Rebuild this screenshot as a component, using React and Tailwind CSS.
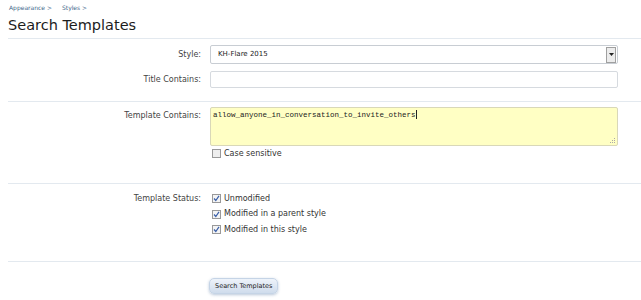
export default function App() {
  const ui = { fontFamily: '"DejaVu Sans", Verdana, sans-serif' };
  return (
    <div className="w-[641px] h-[300px] bg-white overflow-hidden text-[#333]" style={ui}>
      <div className="pl-[9px] pt-[4px]">
        <div className="flex gap-[10px] text-[6px] leading-[8px] text-[#42688a]">
          <span>Appearance &gt;</span>
          <span>Styles &gt;</span>
        </div>
        <h1 className="text-[14.5px] leading-[20px] mt-[3px] text-[#1c1c1c] -ml-[1px]">Search Templates</h1>
      </div>

      <div className="ml-[8px] mt-[3px] border-t border-[#e3e9ef]">
        {/* Style + title */}
        <div className="pt-[6px] pb-[13px]">
          <div className="flex items-center h-[19px]">
            <label className="w-[193px] text-right text-[8px] text-[#444]">Style:</label>
            <div className="ml-[9px] w-[408px] h-[19px] border border-[#c8cdd3] rounded-[2px] flex items-center justify-between bg-white">
              <span className="pl-[7px] text-[7px] text-[#222]">KH-Flare 2015</span>
              <span className="w-[10px] h-[16px] mr-[1px] border border-[#a0a0a0] bg-[#ececec] flex items-center justify-center">
                <svg width="5" height="3" viewBox="0 0 5 3"><path d="M0 0h5L2.5 3z" fill="#222" /></svg>
              </span>
            </div>
          </div>
          <div className="flex items-center h-[17px] mt-[7px]">
            <label className="w-[193px] text-right text-[8px] text-[#444]">Title Contains:</label>
            <div className="ml-[9px] w-[408px] h-[17px] border border-[#d6dadf] rounded-[2px] bg-white" />
          </div>
        </div>

        {/* Template contains */}
        <div className="border-t border-[#e3e9ef] pt-[5px] pb-[24px]">
          <div className="flex items-start">
            <label className="w-[193px] text-right text-[8px] text-[#444] pt-[3px]">Template Contains:</label>
            <div className="ml-[9px]">
              <div
                className="relative w-[408px] h-[39px] border border-[#d9d8b8] rounded-[2px] bg-[#ffffc4] px-[2px] pt-[2px] text-[7.5px] leading-[10px] text-[#222]"
                style={{ fontFamily: '"Liberation Mono", monospace' }}
              >
                <span>allow_anyone_in_conversation_to_invite_others</span>
                <span className="inline-block w-px h-[9px] bg-[#222] align-[-2px]" />
                <svg className="absolute right-[1px] bottom-[1px]" width="6" height="6" viewBox="0 0 6 6">
                  <g fill="#aaa"><rect x="4" y="0" width="1" height="1" /><rect x="2" y="2" width="1" height="1" /><rect x="4" y="2" width="1" height="1" /><rect x="0" y="4" width="1" height="1" /><rect x="2" y="4" width="1" height="1" /><rect x="4" y="4" width="1" height="1" /></g>
                </svg>
              </div>
              <div className="flex items-center mt-[2px] h-[11px]">
                <span className="w-[9px] h-[9px] border border-[#999] bg-[#eee] ml-[2px]" />
                <span className="ml-[3px] text-[8px] text-[#333]">Case sensitive</span>
              </div>
            </div>
          </div>
        </div>

        {/* Status */}
        <div className="border-t border-[#e3e9ef] pt-[9px] pb-[26px]">
          <div className="flex items-start">
            <label className="w-[193px] text-right text-[8px] leading-[11px] text-[#444]">Template Status:</label>
            <div className="ml-[9px] flex flex-col gap-[4.5px]">
              {["Unmodified", "Modified in a parent style", "Modified in this style"].map((t) => (
                <div key={t} className="flex items-center h-[11px]">
                  <span className="w-[9px] h-[9px] border border-[#999] bg-[#f4f4f4] ml-[2px] flex items-center justify-center">
                    <svg width="7" height="7" viewBox="0 0 7 7"><path d="M1 3.5l1.8 2L6 0.8" stroke="#3a5fa8" strokeWidth="1.2" fill="none" /></svg>
                  </span>
                  <span className="ml-[3px] text-[8px] text-[#333]">{t}</span>
                </div>
              ))}
            </div>
          </div>
        </div>

        {/* Button */}
        <div className="border-t border-[#e3e9ef] pt-[9px]">
          <div className="ml-[201px]">
            <button className="h-[16px] px-[5px] rounded-[5px] border border-[#c5d4e6] bg-gradient-to-b from-[#eef3fa] to-[#cfdcec] shadow-[0_1px_3px_rgba(100,130,170,0.45)] text-[6.5px] leading-[14px] text-[#222]">
              Search Templates
            </button>
          </div>
        </div>
      </div>
    </div>
  );
}
